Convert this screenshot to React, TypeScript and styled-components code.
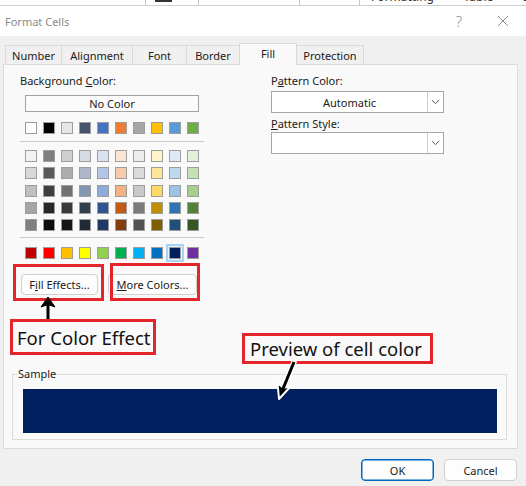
import React from "react";
import styled, { createGlobalStyle } from "styled-components";

const GlobalStyle = createGlobalStyle`
  html, body { margin: 0; padding: 0; background: #f0f0f0; }
  body { font-family: "Noto Sans", "Open Sans", sans-serif; font-size: 11px; color: #1a1a1a; }
  * { box-sizing: border-box; }
`;

const Screen = styled.div`
  position: relative;
  width: 526px;
  height: 486px;
  overflow: hidden;
  background: #f0f0f0;
`;

/* ---------- Excel ribbon strip behind the dialog ---------- */
const Ribbon = styled.div`
  display: flex;
  height: 6px;
  background: #ffffff;
  border-bottom: 1px solid #cfcfcf;
  overflow: hidden;
`;
const RibbonCell = styled.div<{ $w?: number }>`
  flex: ${(p) => (p.$w ? `0 0 ${p.$w}px` : "1 1 auto")};
  border-right: ${(p) => (p.$w ? "1px solid #c4c4c4" : "none")};
  overflow: hidden;
  white-space: nowrap;
`;
const RibbonText = styled.div`
  margin-top: -10px;
  padding-left: 11px;
  font-size: 12px;
  line-height: 14px;
  color: #333;
  word-spacing: 10px;
`;
const RibbonMark = styled.div<{ $ml: number; $w: number }>`
  margin-left: ${(p) => p.$ml}px;
  width: ${(p) => p.$w}px;
  height: 2px;
  background: #333;
`;

/* ---------- Title bar ---------- */
const TitleBar = styled.div`
  display: flex;
  align-items: center;
  height: 30px;
  background: #ffffff;
  padding-left: 5px;
  padding-right: 1px;
`;
const Title = styled.div`
  flex: 1;
  color: #8a8a8a;
  font-size: 11px;
`;
const TitleButton = styled.div`
  width: 44px;
  height: 30px;
  display: flex;
  align-items: center;
  justify-content: center;
  color: #8c8c8c;
  font-size: 15px;
  font-weight: 300;
`;

/* ---------- Body ---------- */
const Body = styled.div`
  padding: 7px 8px 0 3px;
`;
const TabRow = styled.div`
  display: flex;
  align-items: flex-end;
  height: 21px;
  padding-left: 2px;
`;
const Tab = styled.div<{ $w: number; $active?: boolean }>`
  width: ${(p) => p.$w}px;
  height: ${(p) => (p.$active ? 22 : 19)}px;
  margin-left: -1px;
  margin-bottom: ${(p) => (p.$active ? -1 : 0)}px;
  position: relative;
  z-index: ${(p) => (p.$active ? 2 : 1)};
  border: 1px solid #d9d9d9;
  border-bottom: none;
  background: ${(p) => (p.$active ? "#f9f9f9" : "#f0f0f0")};
  display: flex;
  align-items: center;
  justify-content: center;
  padding-bottom: ${(p) => (p.$active ? 3 : 0)}px;
  color: #1a1a1a;
  &:first-child { margin-left: 0; }
`;
const Panel = styled.div`
  height: 385px;
  background: #f9f9f9;
  border: 1px solid #dcdcdc;
  display: flex;
  flex-direction: column;
`;
const Columns = styled.div`
  display: grid;
  grid-template-columns: 251px 173px;
  padding: 8px 0 0 16px;
`;
const Column = styled.div`
  display: flex;
  flex-direction: column;
  align-items: flex-start;
`;
const Label = styled.div<{ $mt?: number }>`
  line-height: 15px;
  height: 15px;
  margin-top: ${(p) => p.$mt ?? 0}px;
  white-space: nowrap;
`;
const NoColorButton = styled.div`
  margin: 7px 0 0 5px;
  width: 174px;
  height: 17px;
  border: 1px solid #a3a3a3;
  background: #fbfbfb;
  display: flex;
  align-items: center;
  justify-content: center;
`;
const SwatchGrid = styled.div<{ $mt: number }>`
  margin: ${(p) => p.$mt}px 0 0 5px;
  display: grid;
  grid-template-columns: repeat(10, 12px);
  column-gap: 6px;
  row-gap: 5.25px;
`;
const Swatch = styled.div<{ $c: string; $sel?: boolean }>`
  width: 12px;
  height: 12px;
  background: ${(p) => p.$c};
  border: 1px solid #9d9d9d;
  box-shadow: ${(p) => (p.$sel ? "0 0 0 1px #e8f3fc, 0 0 0 3px #a9d3f6" : "none")};
`;
const Separator = styled.div<{ $mt: number }>`
  margin-top: ${(p) => p.$mt}px;
  width: 184px;
  height: 1px;
  background: #c9c9c9;
`;
const ButtonRow = styled.div`
  display: flex;
  margin-top: 15px;
`;
const PushButton = styled.div<{ $w: number; $ml: number }>`
  width: ${(p) => p.$w}px;
  height: 21px;
  margin-left: ${(p) => p.$ml}px;
  border: 1px solid #d0d0d0;
  border-radius: 4px;
  background: #fdfdfd;
  display: flex;
  align-items: center;
  justify-content: center;
  white-space: nowrap;
`;
const Dropdown = styled.div<{ $mt: number }>`
  margin-top: ${(p) => p.$mt}px;
  width: 173px;
  height: 22px;
  border: 1px solid #a6a6a6;
  background: #ffffff;
  display: flex;
`;
const DropValue = styled.div`
  flex: 1;
  display: flex;
  align-items: center;
  justify-content: center;
`;
const DropArrow = styled.div`
  width: 16px;
  border-left: 1px solid #cdcdcd;
  display: flex;
  align-items: center;
  justify-content: center;
`;
const SampleGroup = styled.fieldset`
  margin: auto 10px 8px 8px;
  padding: 8px 9px 6px 10px;
  border: 1px solid #dcdcdc;
  min-width: 0;
`;
const SampleLegend = styled.legend`
  margin-left: -6px;
  padding: 0 1px;
  line-height: 14px;
  font-size: 11px;
`;
const SampleFill = styled.div`
  height: 44px;
  background: #002060;
`;
const Footer = styled.div`
  display: flex;
  justify-content: flex-end;
  gap: 10px;
  padding: 10px 1px 0 0;
`;
const DialogButton = styled.div<{ $primary?: boolean }>`
  width: 73px;
  height: 22px;
  border-radius: 4px;
  border: 1px solid ${(p) => (p.$primary ? "#0067c0" : "#d0d0d0")};
  box-shadow: ${(p) => (p.$primary ? "inset 0 0 0 0.5px #0067c0" : "none")};
  background: #fdfdfd;
  display: flex;
  align-items: center;
  justify-content: center;
`;

/* ---------- Annotations (overlay) ---------- */
const RedBox = styled.div<{ $x: number; $y: number; $w: number; $h: number }>`
  position: absolute;
  left: ${(p) => p.$x}px;
  top: ${(p) => p.$y}px;
  width: ${(p) => p.$w}px;
  height: ${(p) => p.$h}px;
  border: 3px solid #e4262c;
  pointer-events: none;
`;
const Callout = styled(RedBox)<{ $pl: number }>`
  display: flex;
  align-items: center;
  padding-left: ${(p) => p.$pl}px;
  font-size: 18.5px;
  color: #111;
  white-space: nowrap;
  background: #f9f9f9;
`;
const ArrowSvg = styled.svg<{ $x: number; $y: number }>`
  position: absolute;
  left: ${(p) => p.$x}px;
  top: ${(p) => p.$y}px;
  overflow: visible;
  pointer-events: none;
`;

const themeRows: string[][] = [
  ["#f2f2f2", "#7f7f7f", "#d0cece", "#d6dce4", "#d9e2f3", "#fbe5d5", "#ededed", "#fff2cc", "#deebf6", "#e2efd9"],
  ["#d8d8d8", "#595959", "#aeabab", "#adb9ca", "#b4c6e7", "#f7cbac", "#dbdbdb", "#fee599", "#bdd7ee", "#c5e0b3"],
  ["#bfbfbf", "#3f3f3f", "#757070", "#8496b0", "#8eaadb", "#f4b183", "#c9c9c9", "#ffd965", "#9cc3e5", "#a8d08d"],
  ["#a5a5a5", "#262626", "#3a3838", "#323f4f", "#2f5496", "#c55a11", "#7b7b7b", "#bf9000", "#2e75b5", "#538135"],
  ["#7f7f7f", "#0c0c0c", "#171616", "#222a35", "#1f3864", "#833c0b", "#525252", "#7f6000", "#1e4e79", "#375623"],
];
const baseRow = ["#ffffff", "#000000", "#e7e6e6", "#44546a", "#4472c4", "#ed7d31", "#a5a5a5", "#ffc000", "#5b9bd5", "#70ad47"];
const standardRow = ["#c00000", "#ff0000", "#ffc000", "#ffff00", "#92d050", "#00b050", "#00b0f0", "#0070c0", "#002060", "#7030a0"];

const tabs: { label: string; w: number; active?: boolean }[] = [
  { label: "Number", w: 57 },
  { label: "Alignment", w: 72 },
  { label: "Font", w: 55 },
  { label: "Border", w: 54 },
  { label: "Fill", w: 58, active: true },
  { label: "Protection", w: 68 },
];

const Chevron = () => (
  <svg width="9" height="6" viewBox="0 0 9 6">
    <path d="M0.8 1 L4.5 4.6 L8.2 1" fill="none" stroke="#5a5a5a" strokeWidth="1" />
  </svg>
);

export default function App() {
  return (
    <>
      <GlobalStyle />
      <Screen>
        <Ribbon>
          <RibbonCell $w={146} />
          <RibbonCell $w={53}>
            <RibbonMark $ml={9} $w={17} />
          </RibbonCell>
          <RibbonCell $w={101} />
          <RibbonCell $w={60} />
          <RibbonCell>
            <RibbonText>Formatting ˅ Table ˅ Sty</RibbonText>
          </RibbonCell>
        </Ribbon>
        <TitleBar>
          <Title>Format Cells</Title>
          <TitleButton>?</TitleButton>
          <TitleButton>
            <svg width="12" height="12" viewBox="0 0 12 12">
              <path d="M1 1 L11 11 M11 1 L1 11" stroke="#8a8a8a" strokeWidth="1" />
            </svg>
          </TitleButton>
        </TitleBar>
        <Body>
          <TabRow>
            {tabs.map((t) => (
              <Tab key={t.label} $w={t.w} $active={t.active}>
                {t.label}
              </Tab>
            ))}
          </TabRow>
          <Panel>
            <Columns>
              <Column>
                <Label>
                  Background <u>C</u>olor:
                </Label>
                <NoColorButton>No Color</NoColorButton>
                <SwatchGrid $mt={10}>
                  {baseRow.map((c, i) => (
                    <Swatch key={i} $c={c} />
                  ))}
                </SwatchGrid>
                <Separator $mt={7} />
                <SwatchGrid $mt={8}>
                  {themeRows.flat().map((c, i) => (
                    <Swatch key={i} $c={c} />
                  ))}
                </SwatchGrid>
                <Separator $mt={6} />
                <SwatchGrid $mt={9}>
                  {standardRow.map((c, i) => (
                    <Swatch key={i} $c={c} $sel={i === 8} />
                  ))}
                </SwatchGrid>
                <ButtonRow>
                  <PushButton $w={77} $ml={1}>
                    F<u>i</u>ll Effects...
                  </PushButton>
                  <PushButton $w={89} $ml={10}>
                    <u>M</u>ore Colors...
                  </PushButton>
                </ButtonRow>
              </Column>
              <Column>
                <Label>
                  P<u>a</u>ttern Color:
                </Label>
                <Dropdown $mt={3}>
                  <DropValue>Automatic</DropValue>
                  <DropArrow>
                    <Chevron />
                  </DropArrow>
                </Dropdown>
                <Label $mt={3}>
                  <u>P</u>attern Style:
                </Label>
                <Dropdown $mt={1}>
                  <DropValue />
                  <DropArrow>
                    <Chevron />
                  </DropArrow>
                </Dropdown>
              </Column>
            </Columns>
            <SampleGroup>
              <SampleLegend>Sample</SampleLegend>
              <SampleFill />
            </SampleGroup>
          </Panel>
          <Footer>
            <DialogButton $primary>OK</DialogButton>
            <DialogButton>Cancel</DialogButton>
          </Footer>
        </Body>

        <RedBox $x={13} $y={264} $w={91} $h={37} />
        <RedBox $x={110} $y={263} $w={90} $h={38} />
        <Callout $x={10} $y={319} $w={146} $h={36} $pl={4}>
          For Color Effect
        </Callout>
        <Callout $x={242} $y={333} $w={191} $h={31} $pl={5}>
          Preview of cell color
        </Callout>
        <ArrowSvg $x={38} $y={296} width="20" height="24" viewBox="0 0 20 24">
          <path d="M10 23 L10 8" stroke="#000" strokeWidth="3" />
          <path d="M10 1 L3 11 L10 8.5 L17 11 Z" fill="#000" stroke="#000" strokeWidth="1" strokeLinejoin="round" />
        </ArrowSvg>
        <ArrowSvg $x={270} $y={360} width="30" height="42" viewBox="0 0 30 42">
          <path d="M24 2 L12.5 30" stroke="#fff" strokeWidth="5.5" strokeLinecap="round" />
          <path d="M9 39 L7.5 23 L13.5 28 L21 26 Z" fill="#000" stroke="#fff" strokeWidth="2" strokeLinejoin="round" />
          <path d="M24 2 L12.5 30" stroke="#000" strokeWidth="3" />
        </ArrowSvg>
      </Screen>
    </>
  );
}
